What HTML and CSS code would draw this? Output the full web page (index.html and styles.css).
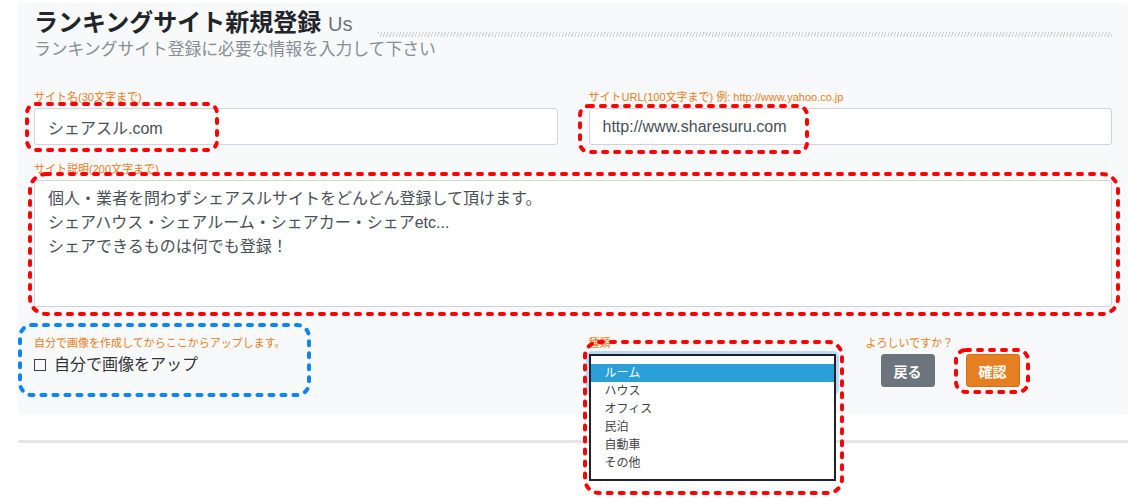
FILE: index.html
```html
<!DOCTYPE html>
<html lang="ja">

<head>
    <meta charset="UTF-8">
    <title>ランキングサイト新規登録</title>
    <link rel="stylesheet" href="styles.css">
</head>

<body>

    <div class="page">

        <section class="panel">

            <div class="title-row">
                <h1>ランキングサイト新規登録 <small>Us</small></h1>
                <span class="stripe"></span>
            </div>
            <p class="lead">ランキングサイト登録に必要な情報を入力して下さい</p>

            <div class="row">
                <div class="field">
                    <label>サイト名(30文字まで)</label>
                    <input class="control" type="text" value="シェアスル.com">
                </div>
                <div class="field">
                    <label>サイトURL(100文字まで) 例: http://www.yahoo.co.jp</label>
                    <input class="control" type="text" value="http://www.sharesuru.com">
                </div>
            </div>

            <div class="field desc">
                <label>サイト説明(200文字まで)</label>
                <textarea class="control area">個人・業者を問わずシェアスルサイトをどんどん登録して頂けます。
シェアハウス・シェアルーム・シェアカー・シェアetc...
シェアできるものは何でも登録！</textarea>
            </div>

            <div class="row bottom">
                <div class="field">
                    <label>自分で画像を作成してからここからアップします。</label>
                    <p class="check"><span class="box"></span>自分で画像をアップ</p>
                </div>

                <div class="actions">
                    <div class="kind">
                        <label>種類</label>
                        <div class="select">
                            <ul class="listbox">
                                <li class="picked">ルーム</li>
                                <li>ハウス</li>
                                <li>オフィス</li>
                                <li>民泊</li>
                                <li>自動車</li>
                                <li>その他</li>
                            </ul>
                        </div>
                    </div>

                    <div class="confirm">
                        <label>よろしいですか？</label>
                        <div class="buttons">
                            <button class="btn back">戻る</button>
                            <button class="btn ok">確認</button>
                        </div>
                    </div>
                </div>
            </div>

        </section>

        <hr class="rule">

        <svg class="marks" width="1136" height="500" viewBox="0 0 1136 500">
            <rect class="red" x="27" y="104" width="190" height="46" rx="9"></rect>
            <rect class="red" x="580" y="106" width="227" height="46" rx="9"></rect>
            <rect class="red" x="30" y="174" width="1088" height="140" rx="16"></rect>
            <rect class="blue" x="20" y="325" width="289" height="70" rx="12"></rect>
            <rect class="red" x="585" y="342" width="257" height="151" rx="14"></rect>
            <rect class="red" x="956" y="350" width="72" height="42" rx="10"></rect>
        </svg>

    </div>

</body>

</html>
```

FILE: styles.css
```css
* {
    margin: 0px;
    padding: 0px;
    box-sizing: border-box;
}

body {
    font-family: "Liberation Sans", "Noto Sans CJK JP", sans-serif;
    color: #212529;
    background: #fff;
}

.page {
    position: relative;
    width: 1136px;
    height: 500px;
    padding: 3px 8px 0 18px;
}

.panel {
    width: 1110px;
    background: #f8f9fa;
    border-radius: 3px;
    padding: 6px 16px 23px 16px;
}

.title-row {
    display: flex;
    align-items: flex-end;
}

h1 {
    font-size: 24px;
    line-height: 28px;
    font-weight: bold;
    color: #212529;
    white-space: nowrap;
}

h1 small {
    font-size: 20px;
    font-weight: normal;
    color: #6c757d;
}

.stripe {
    flex: 1;
    height: 5px;
    margin: 0 0 1px 26px;
    background: repeating-linear-gradient(110deg, #cfcfcf 0 1px, transparent 1px 3px);
}

.lead {
    margin-top: 1px;
    font-size: 16.8px;
    line-height: 22px;
    color: #868e96;
}

.row {
    display: grid;
    grid-template-columns: 1fr 1fr;
    column-gap: 31px;
    margin-top: 30px;
}

label {
    display: block;
    font-size: 11px;
    line-height: 12px;
    color: #e67e22;
    margin-bottom: 5px;
    white-space: nowrap;
}

.control {
    display: block;
    width: 100%;
    height: 37px;
    padding: 0 13px;
    font-family: inherit;
    font-size: 16px;
    color: #495057;
    background: #fff;
    border: 1px solid #ced4da;
    border-radius: 3px;
    outline: none;
}

.desc {
    margin-top: 18px;
}

.area {
    height: 127px;
    padding: 6px 13px;
    line-height: 24px;
    resize: none;
    overflow: hidden;
}

.bottom {
    margin-top: 30px;
}

.check {
    display: flex;
    align-items: center;
    font-size: 16px;
    line-height: 22px;
    color: #333;
}

.box {
    width: 12px;
    height: 12px;
    border: 1px solid #444;
    margin-right: 8px;
}

.actions {
    display: flex;
}

.kind {
    width: 247px;
}

.select {
    position: relative;
    height: 38px;
    margin-top: 3px;
    background: #fff;
    border: 1px solid #80bdff;
    border-radius: 3px;
    box-shadow: 0 0 0 3px rgba(0, 123, 255, .25);
}

.listbox {
    position: absolute;
    top: -1px;
    left: -1px;
    width: 247px;
    height: 127px;
    padding-top: 8px;
    list-style: none;
    background: #fff;
    border: 2px solid #222;
}

.listbox li {
    height: 18px;
    line-height: 18px;
    padding-left: 14px;
    font-size: 12px;
    color: #444;
}

.listbox .picked {
    background: #2a9fd8;
    color: #fff;
}

.confirm {
    margin-left: 30px;
}

.buttons {
    display: flex;
    gap: 31px;
    margin: 3px 0 0 15px;
}

.btn {
    height: 33px;
    padding: 0 12px;
    font-family: inherit;
    font-size: 14px;
    font-weight: bold;
    color: #fff;
    border-radius: 3px;
}

.back {
    width: 54px;
    background: #6c757d;
    border: 1px solid #6c757d;
}

.ok {
    width: 54px;
    background: #e67e22;
    border: 1px solid #d0701c;
}

.rule {
    width: 1110px;
    margin-top: 25px;
    border: none;
    height: 3px;
    background: #e5e5e5;
}

.marks {
    position: absolute;
    top: 0;
    left: 0;
    pointer-events: none;
}

.marks rect {
    fill: none;
    stroke-width: 4;
    stroke-dasharray: 4 8;
    stroke-linecap: round;
}

.marks .red {
    stroke: #ff0000;
}

.marks .blue {
    stroke: #0a84ff;
}
```
